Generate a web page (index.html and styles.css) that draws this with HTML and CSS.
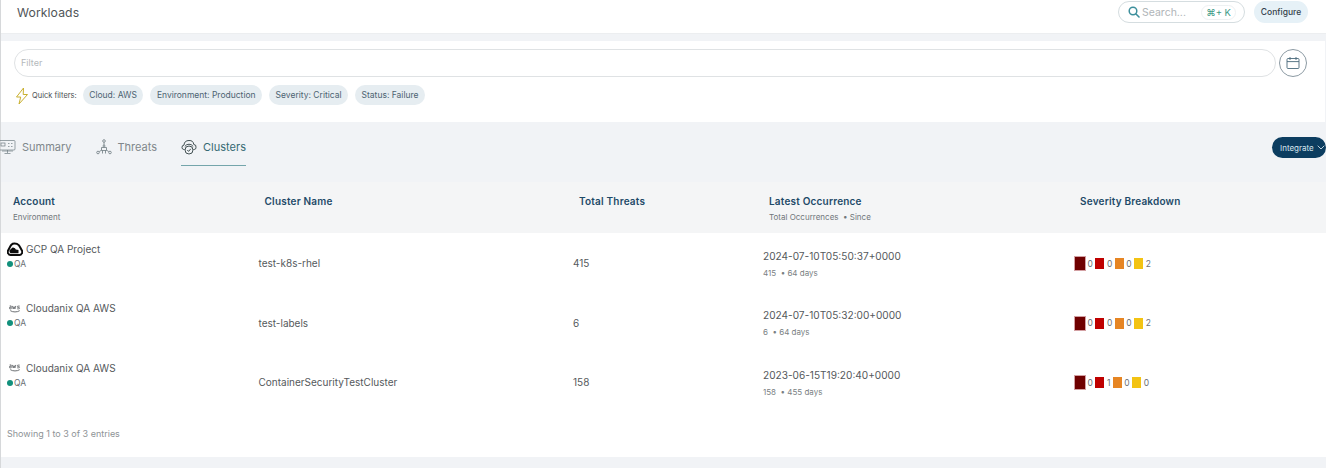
FILE: index.html
```html
<!DOCTYPE html>
<html lang="en">
<head>
<meta charset="utf-8">
<title>Workloads</title>
<link rel="stylesheet" href="styles.css">
</head>
<body>
<div class="app">
  <header class="topbar">
    <h1 class="title">Workloads</h1>
    <div class="top-actions">
      <div class="search">
        <svg class="search-icon" viewBox="0 0 12 12" width="12" height="12"><circle cx="5" cy="5" r="3.800" fill="none" stroke="#3d8f9c" stroke-width="1.500"/><path d="M8 8l3 3" stroke="#3d8f9c" stroke-width="1.600" stroke-linecap="round"/></svg>
        <span class="search-text">Search...</span>
        <span class="kbd">⌘+ K</span>
      </div>
      <button class="configure">Configure</button>
    </div>
  </header>
  <section class="filters">
    <div class="filter-row">
      <div class="filter-input">Filter</div>
      <div class="cal">
        <svg viewBox="0 0 14 14" width="14" height="14" fill="none" stroke="#4a6a7c" stroke-width=".9"><rect x="1" y="2.500" width="12" height="10" rx="1"/><path d="M1 5.600h12M4 1v3M10 1v3"/></svg>
      </div>
    </div>
    <div class="quick">
      <svg class="bolt" viewBox="0 0 14 18" width="14" height="18" fill="none" stroke="#c9b02f" stroke-width="1"><path d="M8.500 1L1.500 10h4.200L4 17l8.500-9.500H8.200z"/></svg>
      <span class="quick-label">Quick filters:</span>
      <span class="chip">Cloud: AWS</span>
      <span class="chip">Environment: Production</span>
      <span class="chip">Severity: Critical</span>
      <span class="chip">Status: Failure</span>
    </div>
  </section>
  <nav class="tabs">
    <div class="tab">
      <svg viewBox="0 0 16 16" width="16" height="16" fill="none" stroke="#6f7b82" stroke-width=".7"><rect x="-1" y="1.500" width="16" height="9.500" rx="1"/><rect x="1" y="4" width="4" height="3"/><path d="M8 4.500h1.500M11 4.500h1.500M8 7.500h1.500M11 7.500h1.500M2 12h11M7.500 11v3M4.500 14.500h6"/></svg>
      <span>Summary</span>
    </div>
    <div class="tab">
      <svg viewBox="0 0 16 16" width="16" height="16" fill="none" stroke="#6f7b82" stroke-width=".8"><circle cx="8" cy="2" r="1.300"/><circle cx="2" cy="13.500" r="1.300"/><circle cx="14" cy="13.500" r="1.300"/><path d="M8 3.300v3M3.200 12.600l2.300-1.400M12.800 12.600l-2.300-1.400"/><path d="M5.500 8.500h5v3h-5z"/><circle cx="8" cy="7" r="1"/><path d="M6.500 14.500v-3M9.500 14.500v-3"/></svg>
      <span>Threats</span>
    </div>
    <div class="tab active">
      <svg viewBox="0 0 16 16" width="16" height="16" fill="none" stroke="#2e3d40" stroke-width=".9"><path d="M3.600 10.500H2.800A2 2 0 0 1 1 8.500a2.200 2.200 0 0 1 2-2.400A5 5 0 0 1 8 1.500a4.600 4.600 0 0 1 4.800 4 2.400 2.400 0 0 1 2.200 2.800 2 2 0 0 1-1.800 2.200h-.8"/><path d="M3.800 7.500a5 5 0 0 1 8.400 0"/><circle cx="8" cy="11" r="4"/><path d="M6.300 11l1.300 1.400 2.200-2.600"/></svg>
      <span>Clusters</span>
    </div>
    <button class="integrate">Integrate
      <svg viewBox="0 0 8 5" width="8" height="5" fill="none" stroke="#cfe0ea" stroke-width=".9"><path d="M.7.700L4 4 7.300.700"/></svg>
    </button>
  </nav>
  <main class="table">
    <div class="row head">
      <div class="hcell"><div class="hname">Account</div><div class="hsub">Environment</div></div>
      <div class="hcell"><div class="hname">Cluster Name</div></div>
      <div class="hcell"><div class="hname">Total Threats</div></div>
      <div class="hcell"><div class="hname">Latest Occurrence</div><div class="hsub">Total Occurrences &nbsp;• Since</div></div>
      <div class="hcell"><div class="hname">Severity Breakdown</div></div>
    </div>

    <div class="row data">
      <div class="account">
        <div class="acct-name">
          <svg class="acct-icon" viewBox="0 0 16 14" width="16" height="14"><path d="M5.600 1.800A5.800 5.800 0 0 1 13 5l1.900 3.400A3.100 3.100 0 0 1 12.400 13H3.600A3.100 3.100 0 0 1 1.100 8.400L3.500 4A5.800 5.800 0 0 1 5.600 1.800z" fill="none" stroke="#0c0c0c" stroke-width="2"/><path d="M3.500 11.200a2.400 2.400 0 0 1 .6-4.300 2.600 2.600 0 0 1 4.700.5l2.700 .6v3.200z" fill="#0c0c0c"/></svg>
          <span>GCP QA Project</span>
        </div>
        <div class="env"><i class="dot"></i>QA</div>
      </div>
      <div class="cell">test-k8s-rhel</div>
      <div class="cell">415</div>
      <div class="occ"><div class="occ-date">2024-07-10T05:50:37+0000</div><div class="occ-sub">415 &nbsp;• 64 days</div></div>
      <div class="sev">
        <i class="sq s1"></i><b>0</b><i class="sq s2"></i><b>0</b><i class="sq s3"></i><b>0</b><i class="sq s4"></i><b>2</b>
      </div>
    </div>

    <div class="row data">
      <div class="account">
        <div class="acct-name">
          <svg class="acct-icon aws" viewBox="0 0 14 10" width="12" height="9" fill="none" stroke="#55595c" stroke-width=".9"><path d="M.8 2h1.700v3.500H1.300a1 1 0 0 1 0-2h1.200"/><path d="M4 2l.9 3.500 1-2.700 1 2.700.9-3.500"/><path d="M12.500 2.200h-2a.8.8 0 0 0 0 1.600h1a.8.8 0 0 1 0 1.600h-2"/><path d="M1.500 7.500c3 2 8 2 11 0" stroke-width="1"/></svg>
          <span>Cloudanix QA AWS</span>
        </div>
        <div class="env"><i class="dot"></i>QA</div>
      </div>
      <div class="cell">test-labels</div>
      <div class="cell">6</div>
      <div class="occ"><div class="occ-date">2024-07-10T05:32:00+0000</div><div class="occ-sub">6 &nbsp;• 64 days</div></div>
      <div class="sev">
        <i class="sq s1"></i><b>0</b><i class="sq s2"></i><b>0</b><i class="sq s3"></i><b>0</b><i class="sq s4"></i><b>2</b>
      </div>
    </div>

    <div class="row data">
      <div class="account">
        <div class="acct-name">
          <svg class="acct-icon aws" viewBox="0 0 14 10" width="12" height="9" fill="none" stroke="#55595c" stroke-width=".9"><path d="M.8 2h1.700v3.500H1.300a1 1 0 0 1 0-2h1.200"/><path d="M4 2l.9 3.500 1-2.700 1 2.700.9-3.500"/><path d="M12.500 2.200h-2a.8.8 0 0 0 0 1.600h1a.8.8 0 0 1 0 1.600h-2"/><path d="M1.500 7.500c3 2 8 2 11 0" stroke-width="1"/></svg>
          <span>Cloudanix QA AWS</span>
        </div>
        <div class="env"><i class="dot"></i>QA</div>
      </div>
      <div class="cell">ContainerSecurityTestCluster</div>
      <div class="cell">158</div>
      <div class="occ"><div class="occ-date">2023-06-15T19:20:40+0000</div><div class="occ-sub">158 &nbsp;• 455 days</div></div>
      <div class="sev">
        <i class="sq s1"></i><b>0</b><i class="sq s2"></i><b>1</b><i class="sq s3"></i><b>0</b><i class="sq s4"></i><b>0</b>
      </div>
    </div>

    <div class="entries">Showing 1 to 3 of 3 entries</div>
  </main>
</div>
</body>
</html>
```
FILE: styles.css
```css
* { box-sizing: border-box; }
html, body { margin: 0; padding: 0; }
body {
  width: 1326px;
  height: 468px;
  overflow: hidden;
  background: #fff;
  font-family: "Inter", "Liberation Sans", sans-serif;
  color: #4a4f52;
}
.app {
  height: 468px;
  border-left: 1px solid #d6d8da;
  background: #f1f3f6;
  display: flex;
  flex-direction: column;
}
.topbar {
  height: 34px;
  flex: none;
  background: #fff;
  display: flex;
  align-items: center;
  justify-content: space-between;
  padding: 0 18px 9px 16px;
  border-bottom: 1px solid #eceef0;
}
.title {
  margin: 0;
  font-size: 12.200px;
  font-weight: 400;
  color: #505558;
  letter-spacing: .1px;
}
.top-actions { display: flex; align-items: center; gap: 9px; }
.search {
  width: 127px;
  height: 22px;
  border: 1px solid #d5dde0;
  border-radius: 11px;
  display: flex;
  align-items: center;
  padding: 0 8px 0 9px;
  font-size: 10.500px;
  color: #b0b5b8;
}
.search-icon { flex: none; margin-right: 2px; }
.search-text { flex: 1; }
.kbd {
  font-size: 9.500px;
  color: #3e9a86;
  border: 1px solid #eef1f2;
  border-radius: 8px;
  padding: 0 4px;
  line-height: 13px;
}
.configure {
  width: 54px;
  height: 22px;
  border: 0;
  border-radius: 11px;
  padding: 0;
  background: #e6f1f7;
  color: #33424c;
  font: 500 8.500px "Inter", "Liberation Sans", sans-serif;
}
.filters {
  flex: none;
  height: 81px;
  margin-top: 7px;
  width: 1324px;
  background: #fff;
  padding: 8px 18px 0 13px;
}
.filter-row { display: flex; align-items: center; gap: 3px; }
.filter-input {
  flex: 1;
  height: 28px;
  border: 1px solid #dfe2e4;
  border-radius: 14px;
  padding: 0 6px;
  line-height: 26px;
  font-size: 9px;
  color: #b4b8bb;
}
.cal {
  width: 28px;
  height: 28px;
  border: 1px solid #8c9aa3;
  border-radius: 50%;
  display: flex;
  align-items: center;
  justify-content: center;
}
.quick { display: flex; align-items: center; margin-top: 8px; height: 20px; }
.bolt { flex: none; margin: 1px 3px 0 1px; }
.quick-label { font-size: 7.500px; color: #4b4f52; margin-right: 6px; white-space: nowrap; }
.chip {
  height: 20px;
  padding: 0 6.500px;
  margin-right: 7px;
  border-radius: 10px;
  background: #e6edf1;
  color: #4d6372;
  font-size: 8.500px;
  line-height: 20px;
  white-space: nowrap;
}
.tabs {
  flex: none;
  height: 60px;
  display: flex;
  align-items: flex-start;
  position: relative;
  background: #f1f3f6;
}
.tab {
  height: 44px;
  display: flex;
  align-items: center;
  gap: 6px;
  font-size: 11px;
  color: #80878b;
  margin-right: 24px;
  border-bottom: 1px solid transparent;
  padding-top: 7px;
}
.tab:first-child svg { margin-left: -1px; }
.tab.active { color: #356a73; border-bottom-color: #74a5ab; }
.integrate {
  position: absolute;
  right: 0;
  top: 15px;
  width: 54px;
  height: 21px;
  border: 0;
  border-radius: 11px;
  padding: 0 0 0 8px;
  background: #0c3d60;
  color: #d7e6ef;
  font: 400 8px "Inter", "Liberation Sans", sans-serif;
  display: flex;
  align-items: center;
  gap: 3px;
}
.table { flex: none; background: #fff; height: 275px; width: 1325px; }
.row {
  display: grid;
  grid-template-columns: 251.500px 314.500px 190px 311px 1fr;
  padding-left: 6px;
}
.head { height: 51px; background: #f4f5f6; }
.hcell { padding: 13px 0 0 6px; }
.hname { font-size: 10px; font-weight: 600; color: #1e4a68; line-height: 13px; letter-spacing: .2px; }
.hsub { font-size: 8px; color: #71777b; margin-top: 4px; line-height: 10px; }
.data { height: 59.500px; align-items: center; font-size: 10px; color: #55595c; }
.cell { padding-top: 1px; }
.account { align-self: start; padding-top: 8px; }
.acct-name { display: flex; align-items: center; height: 15px; font-size: 10px; }
.acct-icon { flex: none; margin-right: 3px; }
.acct-icon.aws { margin: 0 5px 0 2px; }
.env { display: flex; align-items: center; gap: 1px; font-size: 8.500px; color: #6b7074; height: 13px; margin-top: 1px; }
.dot { width: 6px; height: 6px; border-radius: 50%; background: #12907c; flex: none; }
.occ { padding-top: 1px; }
.occ-date { font-size: 10.100px; line-height: 14px; color: #55595c; }
.occ-sub { font-size: 8px; line-height: 10px; margin-top: 5px; color: #7a7f83; }
.sev { display: flex; align-items: center; padding-top: 2px; }
.sq { display: block; width: 9px; height: 11px; flex: none; }
.sq.s1 { background: #6f0000; outline: 1px solid #d3a0a3; height: 13px; width: 10px; margin-left: 1px; }
.sq.s2 { background: #bf0000; }
.sq.s3 { background: #e68523; }
.sq.s4 { background: #f3c313; }
.sev b { font-weight: 400; font-size: 8.500px; padding: 0 2.500px; color: #6b7074; }
.entries { font-size: 9px; color: #8e9396; padding: 16px 0 0 6px; }
```
